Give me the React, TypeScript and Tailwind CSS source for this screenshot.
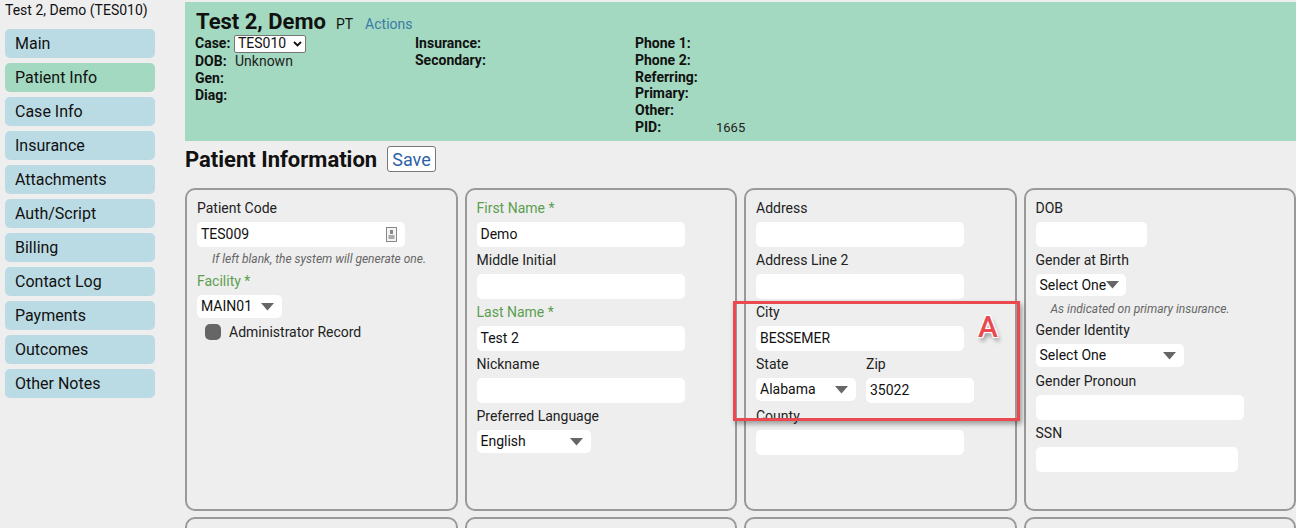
import React from 'react'

const navItems = [
  'Main',
  'Patient Info',
  'Case Info',
  'Insurance',
  'Attachments',
  'Auth/Script',
  'Billing',
  'Contact Log',
  'Payments',
  'Outcomes',
  'Other Notes',
]

function Arrow() {
  return (
    <svg width="13" height="8" viewBox="0 0 13 8" className="shrink-0">
      <path d="M0 0 L13 0 L6.5 7.5 Z" fill="#666" />
    </svg>
  )
}

function Label({ children, green }: { children: React.ReactNode; green?: boolean }) {
  return (
    <div className={`h-[18px] leading-[18px] text-[14px] mb-[5px] ${green ? 'text-[#5c9e4e]' : 'text-[#222]'}`}>
      {children}
    </div>
  )
}

function Input({ w, value, icon }: { w: string; value?: string; icon?: boolean }) {
  return (
    <div className={`${w} h-[25px] bg-white rounded-[5px] flex items-center px-[4px] text-[14px] text-[#111] mb-[4px]`}>
      <span className="flex-1">{value}</span>
      {icon && (
        <svg width="11" height="15" viewBox="0 0 11 15" className="mr-[4px]">
          <rect x="0.5" y="0.5" width="10" height="14" fill="#f4f4f4" stroke="#888" />
          <rect x="4" y="3" width="3" height="4" fill="#888" />
          <rect x="2.5" y="8" width="6" height="4" fill="#aaa" />
        </svg>
      )}
    </div>
  )
}

function Select({ w, h, value }: { w: string; h: string; value: string }) {
  return (
    <div className={`${w} ${h} bg-white rounded-[5px] flex items-center pl-[4px] pr-[8px] text-[14px] text-[#111] mb-[4px]`}>
      <span className="flex-1">{value}</span>
      <Arrow />
    </div>
  )
}

function Hint({ children }: { children: React.ReactNode }) {
  return <div className="h-[16px] leading-[16px] text-[12px] italic text-[#666] pl-[15px]">{children}</div>
}

function Card({ children, h = 'h-[323px]' }: { children?: React.ReactNode; h?: string }) {
  return (
    <div className={`${h} border-2 border-[#999] rounded-[10px] bg-[#eeeeee] pt-[9px] pl-[10px] pr-[10px]`}>
      {children}
    </div>
  )
}

function Info({ label, value, w }: { label: string; value?: React.ReactNode; w: string }) {
  return (
    <div className="h-[16.8px] flex items-center text-[14px] leading-[17px]">
      <span className={`${w} font-bold text-[#111] shrink-0`}>{label}</span>
      {value}
    </div>
  )
}

export default function App() {
  return (
    <div className="relative h-[528px] w-[1296px] overflow-hidden bg-[#eeeeee] flex font-['Roboto',sans-serif]">
      {/* sidebar */}
      <div className="w-[185px] shrink-0 pl-[5px]">
        <div className="h-[22px] pt-[1px] text-[14px] leading-[18px] text-[#111]">Test 2, Demo (TES010)</div>
        <div className="mt-[7px] flex flex-col gap-[5px]">
          {navItems.map((item) => (
            <div
              key={item}
              className={`w-[150px] h-[29px] rounded-[5px] pl-[10px] flex items-center text-[16px] text-[#111] ${
                item === 'Patient Info' ? 'bg-[#a3d9c0]' : 'bg-[#bbdbe4]'
              }`}
            >
              {item}
            </div>
          ))}
        </div>
      </div>

      {/* main */}
      <div className="flex-1 pt-[2px]">
        <div className="h-[139px] bg-[#a3d9c0] pl-[10px] pt-[3px]">
          <div className="flex items-baseline h-[29px] pl-[1px]">
            <span className="text-[22px] font-bold text-[#111]">Test 2, Demo</span>
            <span className="ml-[10px] text-[14px] text-[#111]">PT</span>
            <span className="ml-[12px] text-[14px] text-[#3b7aa6]">Actions</span>
          </div>
          <div className="flex">
            <div className="w-[220px]">
              <div className="h-[19px] flex items-center text-[14px]">
                <span className="w-[39px] font-bold text-[#111]">Case:</span>
                <span className="h-[18px] w-[72px] bg-white border border-[#767676] rounded-[2px] flex items-center pl-[3px] pr-[3px] text-[14px] text-[#111]">
                  <span className="flex-1">TES010</span>
                  <svg width="9" height="6" viewBox="0 0 9 6">
                    <path d="M1 1 L4.5 4.5 L8 1" stroke="#111" strokeWidth="1.8" fill="none" />
                  </svg>
                </span>
              </div>
              <Info label="DOB:" w="w-[40px]" value={<span className="text-[14px] text-[#222]">Unknown</span>} />
              <Info label="Gen:" w="w-[40px]" />
              <Info label="Diag:" w="w-[40px]" />
            </div>
            <div className="w-[220px] pt-[1px]">
              <Info label="Insurance:" w="w-[80px]" />
              <Info label="Secondary:" w="w-[80px]" />
            </div>
            <div className="w-[220px] pt-[1px]">
              <Info label="Phone 1:" w="w-[81px]" />
              <Info label="Phone 2:" w="w-[81px]" />
              <Info label="Referring:" w="w-[81px]" />
              <Info label="Primary:" w="w-[81px]" />
              <Info label="Other:" w="w-[81px]" />
              <Info label="PID:" w="w-[81px]" value={<span className="text-[13px] text-[#222]">1665</span>} />
            </div>
          </div>
        </div>

        <div className="flex items-center h-[26px] mt-[5px] mb-[16px]">
          <span className="text-[22px] font-bold text-[#111]">Patient Information</span>
          <span className="ml-[10px] h-[26px] px-[4px] flex items-center border border-[#777] rounded-[3px] bg-white text-[18px] text-[#2e62a8]">
            Save
          </span>
        </div>

        <div className="grid grid-cols-4 gap-x-[7px] gap-y-[6px]">
          <Card>
            <Label>Patient Code</Label>
            <Input w="w-[208px]" value="TES009" icon />
            <div className="mb-[5px]">
              <Hint>If left blank, the system will generate one.</Hint>
            </div>
            <Label green>Facility *</Label>
            <Select w="w-[85px]" h="h-[23px]" value="MAIN01" />
            <div className="flex items-center h-[20px] pl-[8px] mt-[3px]">
              <span className="w-[16px] h-[16px] rounded-[5px] bg-[#666]" />
              <span className="ml-[8px] text-[14px] text-[#222]">Administrator Record</span>
            </div>
          </Card>
          <Card>
            <Label green>First Name *</Label>
            <Input w="w-[208px]" value="Demo" />
            <Label>Middle Initial</Label>
            <Input w="w-[208px]" />
            <Label green>Last Name *</Label>
            <Input w="w-[208px]" value="Test 2" />
            <Label>Nickname</Label>
            <Input w="w-[208px]" />
            <Label>Preferred Language</Label>
            <Select w="w-[114px]" h="h-[23px]" value="English" />
          </Card>
          <Card>
            <Label>Address</Label>
            <Input w="w-[208px]" />
            <Label>Address Line 2</Label>
            <Input w="w-[208px]" />
            <Label>City</Label>
            <Input w="w-[208px]" value="BESSEMER" />
            <div className="flex gap-[10px]">
              <div>
                <Label>State</Label>
                <Select w="w-[100px]" h="h-[23px]" value="Alabama" />
              </div>
              <div>
                <Label>Zip</Label>
                <Input w="w-[108px]" value="35022" />
              </div>
            </div>
            <Label>County</Label>
            <Input w="w-[208px]" />
          </Card>
          <Card>
            <Label>DOB</Label>
            <Input w="w-[111px]" />
            <Label>Gender at Birth</Label>
            <div className="h-[22px] w-[90px] bg-white rounded-[5px] flex items-center pl-[4px] text-[14px] text-[#111]">
              <span>Select One</span>
              <Arrow />
            </div>
            <div className="h-[25px] pt-[5px]">
              <Hint>As indicated on primary insurance.</Hint>
            </div>
            <Label>Gender Identity</Label>
            <Select w="w-[148px]" h="h-[23px]" value="Select One" />
            <div className="h-[1px]" />
            <Label>Gender Pronoun</Label>
            <Input w="w-[208px]" />
            <Label>SSN</Label>
            <Input w="w-[202px]" />
          </Card>
          <Card h="h-[100px]" />
          <Card h="h-[100px]" />
          <Card h="h-[100px]" />
          <Card h="h-[100px]" />
        </div>
      </div>

      {/* annotation overlay */}
      <div className="absolute left-[733px] top-[301px] w-[287px] h-[120px] border-[3px] border-[#ea4a4f] shadow-[2px_3px_5px_rgba(0,0,0,0.35)]">
        <span className="absolute left-[242px] top-[8px] text-[30px] leading-[30px] font-medium text-[#ea4a4f] [text-shadow:0_0_2px_#fff,0_0_2px_#fff,1px_1px_0_#fff,-1px_-1px_0_#fff,1px_-1px_0_#fff,-1px_1px_0_#fff,2px_4px_4px_rgba(0,0,0,0.4)]">
          A
        </span>
      </div>
    </div>
  )
}
